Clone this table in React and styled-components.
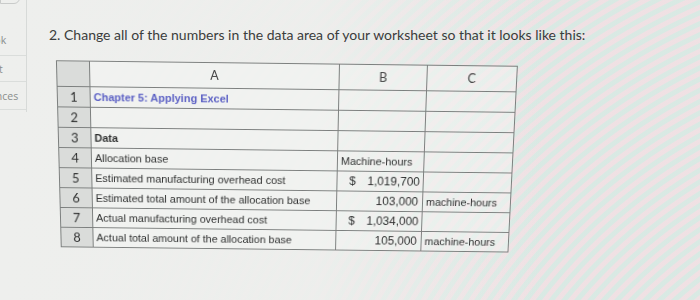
import React from "react";
import styled, { createGlobalStyle } from "styled-components";

const Global = createGlobalStyle`
  html, body { margin: 0; padding: 0; }
  body { background: #e9ecea; }
`;

const Page = styled.div`
  width: 700px;
  height: 300px;
  overflow: hidden;
  display: flex;
  background-color: #eceeec;
  background-image:
    linear-gradient(90deg, rgba(238,239,237,1) 0%, rgba(238,239,237,0.92) 45%, rgba(238,239,237,0) 78%),
    repeating-radial-gradient(circle at 980px 640px,
      rgba(242, 216, 222, 0.6) 0px, rgba(242, 216, 222, 0.6) 4px,
      rgba(204, 230, 222, 0.6) 5px, rgba(204, 230, 222, 0.6) 9px,
      rgba(242, 216, 222, 0.6) 10px);
  font-family: "Liberation Sans", Arial, sans-serif;
`;

const Sidebar = styled.nav`
  width: 26px;
  flex: none;
  display: flex;
  flex-direction: column;
  border-right: 1px solid rgba(200, 204, 202, 0.6);
  height: 112px;
`;

const TopButton = styled.div`
  height: 6px;
  width: 18px;
  margin-top: -4px;
  border: 1px solid #c9cbca;
  border-radius: 0 0 6px 0;
`;

const SideItem = styled.div`
  box-sizing: border-box;
  height: ${p => p.$h}px;
  width: 70px;
  margin-left: -44px;
  padding-bottom: ${p => p.$pb || 0}px;
  display: flex;
  align-items: ${p => (p.$pb ? "flex-end" : "center")};
  justify-content: center;
  white-space: nowrap;
  font-family: "Open Sans", sans-serif;
  font-size: 10.5px;
  line-height: 14px;
  color: #8a8e8c;
  border-bottom: 1px solid rgba(205, 208, 206, 0.6);
`;

const Main = styled.main`
  flex: 1;
  padding: 26px 0 0 22px;
`;

const Heading = styled.p`
  margin: 0;
  font-family: Lato, "Open Sans", sans-serif;
  font-size: 14px;
  line-height: 17px;
  color: #3b3d3c;
`;

const Sheet = styled.table`
  margin: 20px 0 0 7px;
  border-collapse: collapse;
  table-layout: fixed;
  color: #2f3030;
  transform-origin: 50% 0;
  transform: perspective(900px) rotateX(-8.5deg) rotateZ(0.7deg);
`;

const Cell = styled.td`
  border: 1px solid #7c7f7e;
  height: ${p => (p.$head ? 25 : 20)}px;
  padding: 0 ${p => (p.$right ? 4 : 3)}px 0 3px;
  white-space: nowrap;
  text-align: ${p => (p.$center ? "center" : p.$right ? "right" : "left")};
  background: ${p => (p.$gray ? "rgba(214, 216, 214, 0.85)" : "rgba(245, 246, 245, 0.45)")};
  font-family: ${p => (p.$head || p.$idx ? 'Lato, "Open Sans", sans-serif' : '"Liberation Sans", Arial, sans-serif')};
  font-size: ${p => (p.$head ? "12.5px" : p.$idx ? "13px" : p.$num ? "12px" : "11px")};
  font-weight: ${p => (p.$bold ? 700 : 400)};
  color: ${p => (p.$blue ? "#5a5fc4" : p.$head ? "#444" : "#2f3030")};
  vertical-align: middle;
`;

const Money = styled.span`
  display: flex;
  justify-content: space-between;
  padding-left: 9px;
`;

const rows = [
  { n: 1, a: "Chapter 5: Applying Excel", bold: true, blue: true },
  { n: 2, a: "" },
  { n: 3, a: "Data", bold: true },
  { n: 4, a: "Allocation base", b: "Machine-hours", bLeft: true },
  { n: 5, a: "Estimated manufacturing overhead cost", money: "1,019,700" },
  { n: 6, a: "Estimated total amount of the allocation base", b: "103,000", c: "machine-hours" },
  { n: 7, a: "Actual manufacturing overhead cost", money: "1,034,000" },
  { n: 8, a: "Actual total amount of the allocation base", b: "105,000", c: "machine-hours" },
];

export default function App() {
  return (
    <Page>
      <Global />
      <Sidebar>
        <TopButton />
        <SideItem $h={52} $pb={8}>Ebook</SideItem>
        <SideItem $h={26}>Print</SideItem>
        <SideItem $h={28}>References</SideItem>
      </Sidebar>
      <Main>
        <Heading>
          2. Change all of the numbers in the data area of your worksheet so that it looks like this:
        </Heading>
        <Sheet>
          <colgroup>
            <col style={{ width: 33 }} />
            <col style={{ width: 250 }} />
            <col style={{ width: 88 }} />
            <col style={{ width: 90 }} />
          </colgroup>
          <tbody>
            <tr>
              <Cell $gray $head />
              <Cell $head $center>A</Cell>
              <Cell $head $center>B</Cell>
              <Cell $head $center>C</Cell>
            </tr>
            {rows.map(r => (
              <tr key={r.n}>
                <Cell $gray $center $idx>{r.n}</Cell>
                <Cell $bold={r.bold} $blue={r.blue}>{r.a}</Cell>
                {r.money ? (
                  <Cell $num>
                    <Money><span>$</span><span>{r.money}</span></Money>
                  </Cell>
                ) : (
                  <Cell $num={!r.bLeft && !!r.b} $right={!r.bLeft && !!r.b}>{r.b || ""}</Cell>
                )}
                <Cell>{r.c || ""}</Cell>
              </tr>
            ))}
          </tbody>
        </Sheet>
      </Main>
    </Page>
  );
}
